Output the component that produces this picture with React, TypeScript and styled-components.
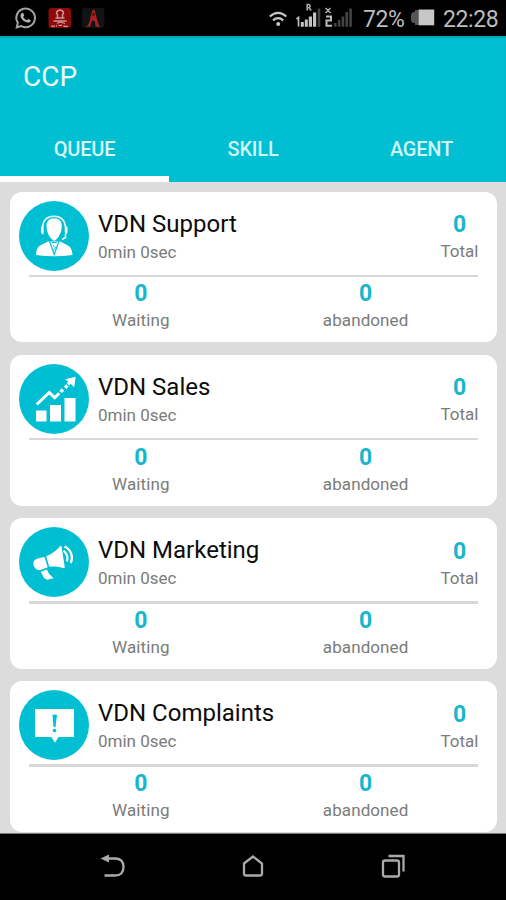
import React from "react";
import styled, { createGlobalStyle } from "styled-components";

const TEAL = "#00bfd3";

const GlobalStyle = createGlobalStyle`
  *, *::before, *::after { box-sizing: border-box; }
  body { margin: 0; background: #000; font-family: Roboto, "Noto Sans", sans-serif; }
`;

const Screen = styled.div`
  width: 506px;
  height: 900px;
  display: flex;
  flex-direction: column;
  overflow: hidden;
  background: #000;
`;

const StatusBar = styled.header`
  flex: none;
  height: 36px;
  padding: 0 8px 0 14px;
  display: flex;
  justify-content: space-between;
  background: #000;
  color: #bdbdbd;
`;

const StatusText = styled.span<{ $width: number }>`
  width: ${(p) => p.$width}px;
  font-size: 23px;
  line-height: 39px;
  white-space: nowrap;
  letter-spacing: -0.4px;
`;

const StatusGroup = styled.div`
  display: flex;
`;

const AppBar = styled.div`
  flex: none;
  height: 146px;
  display: flex;
  flex-direction: column;
  background: ${TEAL};
  box-shadow: inset 0 2px 1px rgba(0, 60, 70, 0.2);
`;

const Title = styled.h1`
  margin: 0;
  padding-left: 23px;
  height: 81px;
  font-size: 28px;
  font-weight: 400;
  line-height: 82px;
  letter-spacing: 0;
  color: #effcfd;
`;

const Tabs = styled.nav`
  flex: 1;
  display: grid;
  grid-template-columns: 169px 168px 169px;
`;

const Tab = styled.button<{ $active?: boolean }>`
  border: 0;
  border-bottom: 6px solid ${(p) => (p.$active ? "#fff" : "transparent")};
  padding: 5px 0 0;
  background: none;
  font: 500 20px/50px Roboto, sans-serif;
  letter-spacing: -0.2px;
  text-align: center;
  color: ${(p) => (p.$active ? "#d8f8fa" : "#d0f5f8")};
`;

const List = styled.main`
  flex: none;
  height: 651px;
  padding: 9.5px 9.5px 0 10px;
  display: flex;
  flex-direction: column;
  gap: 12.5px;
  background: #dcdcdc;
`;

const Card = styled.article`
  flex: none;
  height: 150.8px;
  border-radius: 12px;
  background: #fff;
`;

const CardHead = styled.div`
  height: 83px;
  padding: 9px 18px 0 9px;
  display: flex;
`;

const Badge = styled.svg`
  flex: none;
  width: 70px;
  height: 70px;
`;

const Info = styled.div`
  flex: 1;
  padding: 9px 0 0 9px;
`;

const Name = styled.h2`
  margin: 0;
  font-size: 24px;
  font-weight: 400;
  line-height: 29px;
  letter-spacing: 0;
  color: #0c0c0c;
`;

const Label = styled.div<{ $tight?: boolean }>`
  font-size: 17px;
  line-height: 26px;
  letter-spacing: ${(p) => (p.$tight ? 0 : 0.1)}px;
  color: #7b7b7b;
`;

const Value = styled.div`
  font-size: 23px;
  font-weight: 700;
  line-height: 29px;
  color: #18b6ca;
`;

const Stat = styled.div<{ $top: number }>`
  padding-top: ${(p) => p.$top}px;
  text-align: center;

  ${Label} {
    margin-top: -1px;
  }
`;

const Divider = styled.hr`
  margin: 0 18.5px;
  border: 0;
  height: 2.5px;
  background: #d8d8d8;
`;

const Stats = styled.div`
  margin: 0 18.5px;
  display: grid;
  grid-template-columns: 1fr 1fr;
`;

const NavBar = styled.footer`
  flex: 1;
  border-top: 1px solid #777;
  display: flex;
  justify-content: center;
  align-items: center;
  gap: 108px;
  background: #000;
`;

const NavIcon = styled.svg`
  width: 32px;
  height: 32px;
  fill: none;
  stroke: #aaa;
  stroke-width: 2.3;
`;

const Notifications = () => (
  <svg width="94" height="36" viewBox="14 0 94 36">
    <path d="M16.8 27.3l1-4.5a9.3 9.3 0 1 1 3.6 3.3z" fill="none" stroke="#a4a4a4" strokeWidth="2" />
    <path d="M21.2 13.7c1-1.3 2-1.2 2.4.2l.6 1.6-1 1.4c.9 1.7 2 2.7 3.8 3.4l1.4-1.4 2.1 1.1c.8.5-.2 2-1.4 2.4-2.4.8-5.2-.9-6.9-2.8-1.8-2-2.4-4.300-1-5.900z" fill="#b4b4b4" />
    <rect x="48.500" y="8" width="22.500" height="20" rx="3" fill="#8e0909" />
    <g fill="none" stroke="#c99a98" strokeWidth="1.500">
      <path d="M57.500 17.500v-2.800q-1.500-1.200-.8-2.700 1.200-2 3.300-2t3.300 2q.7 1.500-.8 2.700v2.800M55.500 18h9M53.500 21h13" />
      <path d="M57 23.500l3-1.500 5 1.500M51 26.200h4m1.500-1.200v1.500m2-1.200h3.500m2 0v1h4" strokeWidth="1.200" />
    </g>
    <rect x="82" y="8" width="22.500" height="20" rx="3" fill="#111414" />
    <path d="M86 26.800c3-1.500 3.500-5 4.500-9.500l2-7.300h2l2 7c1.200 4.500 1.700 8.200 4 9.800h-4.800l-1-6h-3l-1.500 6z" fill="#aa2023" />
    <path d="M91.700 15.500l1.700-3 1.700 3z" fill="#321113" />
  </svg>
);

const Signals = () => (
  <svg width="94" height="36" viewBox="269 0 94 36">
    <g fill="none" stroke="#c8c8c8" strokeWidth="2.200">
      <path d="M269.800 16.500q8.200-7.200 16.500 0M273 20.300q5.100-4.200 10.300 0" />
    </g>
    <circle cx="278.200" cy="24" r="2" fill="#c8c8c8" />
    <path d="M296.500 19l2-1.500v9" fill="none" stroke="#bbb" strokeWidth="1.700" />
    <path d="M300.800 22h3v4.800h-3zM304.800 19.500h3v7.300h-3zM308.800 16.500h3.200v10.300h-3.200zM313 12.500h3.200v14.300H313z" fill="#c2c2c2" />
    <path d="M317.700 8.500h2.600v18.300h-2.600z" fill="#444" />
    <path d="M307.200 10.500v-6h2q1.800 1.500 0 3.200h-2m2 0l2 2.800M325.500 8l5 5m0-5l-5 5" fill="none" stroke="#aaa" strokeWidth="1.600" />
    <path d="M326 16.500h5v4h-4.500v5.300h5.500" fill="none" stroke="#bbb" strokeWidth="2" />
    <path d="M334 23h2.600v3.800H334zM337.800 20h2.600v6.800h-2.600zM341.600 16.500h2.600v10.300h-2.600zM345.400 12h2.700v14.800h-2.700zM349.300 8.500h2.600v18.300h-2.600z" fill="#434343" />
  </svg>
);

const Battery = () => (
  <svg width="32" height="36" viewBox="411 0 32 36">
    <path d="M413 12h2V10h5v15h-5v-2h-2l-2-2v-7z" fill="#555" />
    <rect x="418.700" y="9.500" width="15.500" height="15.800" fill="#c7c7c7" />
  </svg>
);

const SupportArt = () => (
  <g>
    <path d="M23.500 31v-4.500C24 18.500 29 15.200 35 15.200s11 3.300 11.500 11.300V31" fill="none" stroke="#e8fbfc" strokeWidth="1.500" />
    <path d="M22 26.500q0-1.500 2.500-1.500v8.500Q22 33 22 31zM48.500 26.500q0-1.500-2.500-1.500v8.500q2.500-.5 2.500-2.500z" fill="#fff" />
    <path d="M27.500 26c-.4-5.800 2.800-8.800 7.700-8.800s8 3 7.600 8.800c-.3 5.500-2.600 9.700-5.300 12.300l-2.300 1.800-2.300-1.800C30 35.700 27.900 31.500 27.500 26z" fill="#fff" />
    <path d="M46.500 33v3.500l-3.500 2" fill="none" stroke="#e8fbfc" strokeWidth="1.600" />
    <path d="M17 54q0-8.500 6-10.500l6-3h12.500l5.500 3q6.500 2.300 6.500 10.500Q35 56.500 17 54z" fill="#fff" />
    <path d="M30.500 40l4.700 13.500L40 40" fill="none" stroke={TEAL} strokeWidth="1.200" />
    <path d="M32.800 41.500h5M33.800 44l2.800 3-2.800 2.500" fill="none" stroke={TEAL} strokeWidth="1" />
  </g>
);

const SalesArt = () => (
  <g fill="#fff">
    <path d="M17 46.500h10.500v11H17zM31 41h11v16.500H31zM45.500 34h11v23.500h-11z" />
    <path d="M17.700 40.500L30.200 28.500l5.500 5.200 4.600-4.500" fill="none" stroke="#fff" strokeWidth="3" />
    <path d="M42.800 24.300l2.400 2.400-2.400 2.400-2.400-2.400zM47.200 20.200l2.400 2.400-2.400 2.400-2.400-2.400zM46 15.200l10.700-2.400-1.500 10.400-3.400-3.400-1.600 1.600-2.400-2.400 1.500-1.500z" />
  </g>
);

const MarketingArt = () => (
  <g fill="#fff">
    <path d="M27.200 29.200c5.300-1.800 10.500-5.700 14-10.200l1.300.3 3.300 21.200-1 .8c-4.500-1.600-9.500-2.200-14.600-1.500z" />
    <path d="M25.500 30l3.200 10.200-7.200 2.800c-3 .6-5.300-.8-6.600-4-1.200-3.400-.2-6.200 3-7.300z" />
    <path d="M21.800 44.800l6-2.300 2.200 4.200 4.500 4.500-6.500 1.500-3-1.800z" />
    <path d="M44.500 23.800q5.500 4 3.500 10.700M45.500 19.500c6.800 3.500 9 10 6.300 16.500" fill="none" stroke="#fff" strokeWidth="2.200" />
  </g>
);

const ComplaintsArt = () => (
  <g>
    <path d="M17 19h37q1 0 1 1v27H39.500L36 52.800 32.500 47H17q-1 0-1-1V20q0-1 1-1z" fill="#fff" />
    <path d="M33.500 25q2.200-1 4.500 0l-1.500 12h-2z" fill={TEAL} />
    <circle cx="35.500" cy="40.500" r="1.800" fill={TEAL} />
  </g>
);

const queues = [
  { name: "VDN Support", Art: SupportArt },
  { name: "VDN Sales", Art: SalesArt },
  { name: "VDN Marketing", Art: MarketingArt },
  { name: "VDN Complaints", Art: ComplaintsArt },
];

function QueueCard({ name, Art }: { name: string; Art: React.FC }) {
  return (
    <Card>
      <CardHead>
        <Badge viewBox="0 0 70 70">
          <circle cx="35" cy="35" r="35" fill={TEAL} />
          <Art />
        </Badge>
        <Info>
          <Name>{name}</Name>
          <Label $tight>0min 0sec</Label>
        </Info>
        <Stat $top={9.5}>
          <Value>0</Value>
          <Label $tight>Total</Label>
        </Stat>
      </CardHead>
      <Divider />
      <Stats>
        <Stat $top={2.3}>
          <Value>0</Value>
          <Label>Waiting</Label>
        </Stat>
        <Stat $top={2.3}>
          <Value>0</Value>
          <Label>abandoned</Label>
        </Stat>
      </Stats>
    </Card>
  );
}

export default function App() {
  return (
    <>
      <GlobalStyle />
      <Screen>
        <StatusBar>
          <Notifications />
          <StatusGroup>
            <Signals />
            <StatusText $width={48}>72%</StatusText>
            <Battery />
            <StatusText $width={55}>22:28</StatusText>
          </StatusGroup>
        </StatusBar>
        <AppBar>
          <Title>CCP</Title>
          <Tabs>
            <Tab $active>QUEUE</Tab>
            <Tab>SKILL</Tab>
            <Tab>AGENT</Tab>
          </Tabs>
        </AppBar>
        <List>
          {queues.map((q) => (
            <QueueCard key={q.name} {...q} />
          ))}
        </List>
        <NavBar>
          <NavIcon viewBox="0 0 32 32">
            <path d="M8 7.500h10q8.500 0 8.500 8.500t-8.500 8.500H7.500" />
            <path d="M3.500 7.500L12 3.500v8z" fill="#aaa" stroke="none" />
          </NavIcon>
          <NavIcon viewBox="0 0 32 32">
            <path d="M7 12.500l9-7 9 7v10q0 2-2 2H9q-2 0-2-2z" />
          </NavIcon>
          <NavIcon viewBox="0 0 32 32">
            <rect x="6" y="9.500" width="16" height="16" rx="2" />
            <path d="M11.500 5h15v15.500" />
          </NavIcon>
        </NavBar>
      </Screen>
    </>
  );
}
